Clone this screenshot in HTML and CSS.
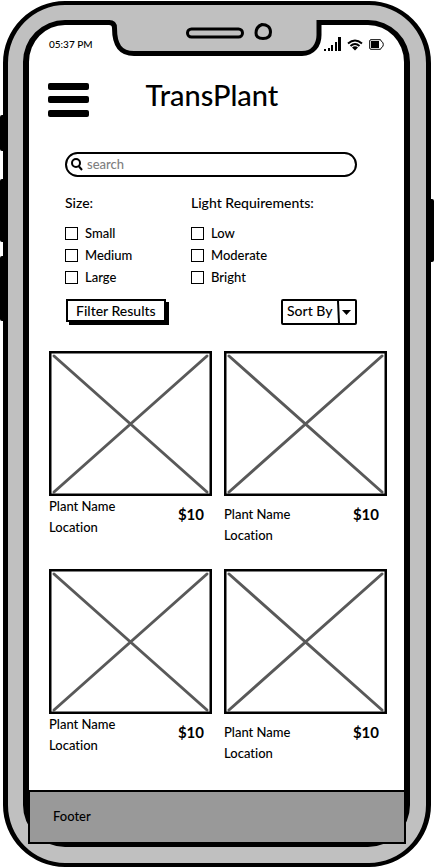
FILE: index.html
```html
<!DOCTYPE html>
<html lang="en">
<head>
<meta charset="utf-8">
<meta name="viewport" content="width=device-width, initial-scale=1">
<title>TransPlant</title>
<link rel="stylesheet" href="styles.css">
</head>
<body>
<div class="phone">
  <span class="side-key key-mute"></span>
  <span class="side-key key-up"></span>
  <span class="side-key key-down"></span>
  <span class="side-key key-power"></span>
  <svg class="notch" width="218" height="38" viewBox="108 19 218 38" aria-hidden="true">
    <path class="bezel" d="M110 19H318V40Q315 53 304 53H134Q115 52 114 28L110 22Z"/>
    <path class="edge" d="M106 22.500H109Q114.500 22.500 114.500 28C114.500 45 120 53.500 134 53.500H302C313 53.500 319 45 319 35V22.500H328"/>
    <rect class="line" x="187.500" y="29" width="55" height="8" rx="4"/>
    <path class="line" d="M262 24.500C258 26 256 29 256 33C256 37 259 38.500 263 38.500C268 38.500 270.500 36 270.500 32C270.500 27 267 24.500 262 24.500Z"/>
  </svg>

  <div class="screen">
    <div class="status">
      <span class="time">05:37 PM</span>
      <span class="status-icons">
        <svg width="17" height="15" viewBox="0 0 17 15" aria-hidden="true"><path d="M0 12h2v2H0zM4 11h2v3H4zM7 8h2v6H7zM11 5h2v9h-2zM14 0h3v14h-3z"/></svg>
        <svg class="wifi" width="16" height="12" viewBox="0 0 16 12" aria-hidden="true"><path class="arc" d="M1 4.500Q8-1.500 15 4.500M3.500 7Q8 3 12.500 7"/><path d="M5 8.500Q8 6 11 8.500L8 11.500Z"/></svg>
        <svg width="15" height="11" viewBox="0 0 15 11" aria-hidden="true"><path class="case" d="M2 .7H11.500L12.500 2.500Q14.300 3 14.300 5.500T12.500 8.500L11.500 10.300H2Q.7 10.300 .7 9V2Q.7 .7 2 .7Z"/><path d="M2 2h8v7H2z"/></svg>
      </span>
    </div>

    <header class="header">
      <button class="menu" type="button" aria-label="Menu">
        <svg width="41" height="34" viewBox="0 0 41 34"><rect width="41" height="7" rx="2"/><rect y="13" width="41" height="7" rx="2"/><rect y="27" width="41" height="7" rx="2"/></svg>
      </button>
      <h1>TransPlant</h1>
    </header>

    <main>
      <form class="filters">
        <label class="search">
          <svg width="12" height="13" viewBox="0 0 12 13" aria-hidden="true"><circle cx="5" cy="5" r="4"/><path d="M8 8.500L11 12"/></svg>
          <input type="search" placeholder="search" aria-label="search">
        </label>
        <div class="groups">
          <fieldset>
            <legend>Size:</legend>
            <label><input type="checkbox">Small</label>
            <label><input type="checkbox">Medium</label>
            <label><input type="checkbox">Large</label>
          </fieldset>
          <fieldset>
            <legend>Light Requirements:</legend>
            <label><input type="checkbox">Low</label>
            <label><input type="checkbox">Moderate</label>
            <label><input type="checkbox">Bright</label>
          </fieldset>
        </div>
        <div class="actions">
          <button class="apply" type="button">Filter Results</button>
          <div class="sort">
            <select aria-label="Sort By"><option>Sort By</option></select>
            <svg width="18" height="22" viewBox="0 0 18 22" aria-hidden="true"><path class="divider" d="M1 0L2 22"/><path d="M5 9H14L9.500 14Z"/></svg>
          </div>
        </div>
      </form>

      <section class="plants">
        <article class="plant">
          <svg viewBox="0 0 163 145" aria-hidden="true"><path class="cross" d="M5 5L158 141M158 5L5 141"/><rect class="frame" x="1.250" y="1.250" width="160.500" height="142.500"/></svg>
          <div class="caption"><p>Plant Name<br>Location</p><strong>$10</strong></div>
        </article>
        <article class="plant">
          <svg viewBox="0 0 163 145" aria-hidden="true"><path class="cross" d="M5 5L158 141M158 5L5 141"/><rect class="frame" x="1.250" y="1.250" width="160.500" height="142.500"/></svg>
          <div class="caption"><p>Plant Name<br>Location</p><strong>$10</strong></div>
        </article>
        <article class="plant">
          <svg viewBox="0 0 163 145" aria-hidden="true"><path class="cross" d="M5 5L158 141M158 5L5 141"/><rect class="frame" x="1.250" y="1.250" width="160.500" height="142.500"/></svg>
          <div class="caption"><p>Plant Name<br>Location</p><strong>$10</strong></div>
        </article>
        <article class="plant">
          <svg viewBox="0 0 163 145" aria-hidden="true"><path class="cross" d="M5 5L158 141M158 5L5 141"/><rect class="frame" x="1.250" y="1.250" width="160.500" height="142.500"/></svg>
          <div class="caption"><p>Plant Name<br>Location</p><strong>$10</strong></div>
        </article>
      </section>
    </main>

    <footer class="footer">Footer</footer>
  </div>
</div>
</body>
</html>
```
FILE: styles.css
```css
* { box-sizing: border-box; }

body {
  margin: 0;
  background: #fff;
  color: #000;
  font: 500 13px/21px Lato, "Open Sans", sans-serif;
  font-variant-ligatures: none;
  display: flow-root;
}

button, input, select { font: inherit; color: inherit; }
svg { display: block; }

/* Device */
.phone {
  position: relative;
  margin: 1px 3px 0;
  padding: 15px 16px 16px 15px;
  border: solid #000;
  border-width: 4px 5px;
  border-radius: 62px;
  background: #c0c0c0;
}

.side-key {
  position: absolute;
  left: -8px;
  width: 7px;
  background: #000;
  border-radius: 2px;
}
.key-mute { top: 110px; height: 36px; }
.key-up { top: 174px; height: 63px; }
.key-down { top: 251px; height: 65px; }
.key-power { top: 194px; height: 63px; left: auto; right: -8px; }

.notch { position: absolute; top: 14px; left: 50%; transform: translateX(-50%); }
.bezel { fill: #c0c0c0; }
.edge { fill: none; stroke: #000; stroke-width: 5; }
.line { fill: none; stroke: #000; stroke-width: 3; }

.screen {
  border: solid #000;
  border-width: 5px 6px;
  border-radius: 42px;
  background: #fff;
}

/* Status bar and header */
.status {
  display: flex;
  justify-content: space-between;
  align-items: center;
  height: 39px;
  padding: 0 20px;
  font-size: 10px;
}
.status-icons { display: flex; align-items: center; gap: 6px; }
.arc { fill: none; stroke: #000; stroke-width: 2; }
.case { fill: none; stroke: #000; stroke-width: 1; }

.header {
  display: grid;
  grid-template-columns: 41px 1fr 41px;
  align-items: start;
  padding: 19px 28px 0 19px;
}
.menu { padding: 0; border: 0; background: none; }
h1 {
  margin: 0;
  font-size: 29px;
  line-height: 24px;
  font-weight: 500;
  text-align: center;
}

/* Filters */
.filters { margin: 35px 47px 0 36px; }

.search {
  display: flex;
  align-items: center;
  gap: 4px;
  height: 25px;
  padding: 0 4px;
  border: 2px solid #000;
  border-radius: 13px;
}
.search svg { fill: none; stroke: #000; stroke-width: 2; }
.search input {
  flex: 1;
  min-width: 0;
  padding: 0;
  border: 0;
  outline: 0;
  background: none;
}
.search input::placeholder { color: #808080; }

.groups {
  display: grid;
  grid-template-columns: 126px 1fr;
  margin-top: 16px;
}
fieldset { min-width: 0; margin: 0; padding: 0; border: 0; }
legend {
  padding: 0;
  margin-bottom: 9px;
  font-size: 14px;
  line-height: 20px;
  white-space: nowrap;
}
fieldset label {
  display: flex;
  align-items: center;
  gap: 7px;
  height: 22px;
}
fieldset input {
  appearance: none;
  width: 13px;
  height: 13px;
  margin: 0;
  border: 1px solid #000;
}

.actions {
  display: flex;
  justify-content: space-between;
  align-items: start;
  margin-top: 11px;
  font-size: 14px;
}
.apply {
  height: 23px;
  margin-left: 1px;
  padding: 0 8px;
  border: 2px solid #000;
  background: #fff;
  box-shadow: 3px 3px #000;
  line-height: 18px;
}
.sort {
  display: flex;
  height: 26px;
  border: 2px solid #000;
  border-radius: 2px;
}
.sort select {
  appearance: none;
  height: 20px;
  padding: 0 4px;
  border: 0;
  background: none;
  line-height: 20px;
}
.divider { stroke: #000; stroke-width: 2; }

/* Plants */
.plants {
  display: grid;
  grid-template-columns: 1fr 1fr;
  gap: 23px 12px;
  margin: 26px 17px 0 20px;
}
.plant svg { width: 100%; height: auto; }
.frame { fill: none; stroke: #000; stroke-width: 2.5; }
.cross { stroke: #595959; stroke-width: 3; stroke-linecap: round; }
.caption {
  display: flex;
  justify-content: space-between;
  align-items: start;
  padding-right: 8px;
}
.caption p { margin: 0; }
.plant:nth-child(even) p { margin-top: 8px; }
.caption strong { margin-top: 8px; font-size: 15px; }

.footer {
  position: relative;
  margin: 26px -2px -2px -1px;
  padding: 14px 23px 15px;
  border: 2px solid #000;
  background: #999;
}
```
